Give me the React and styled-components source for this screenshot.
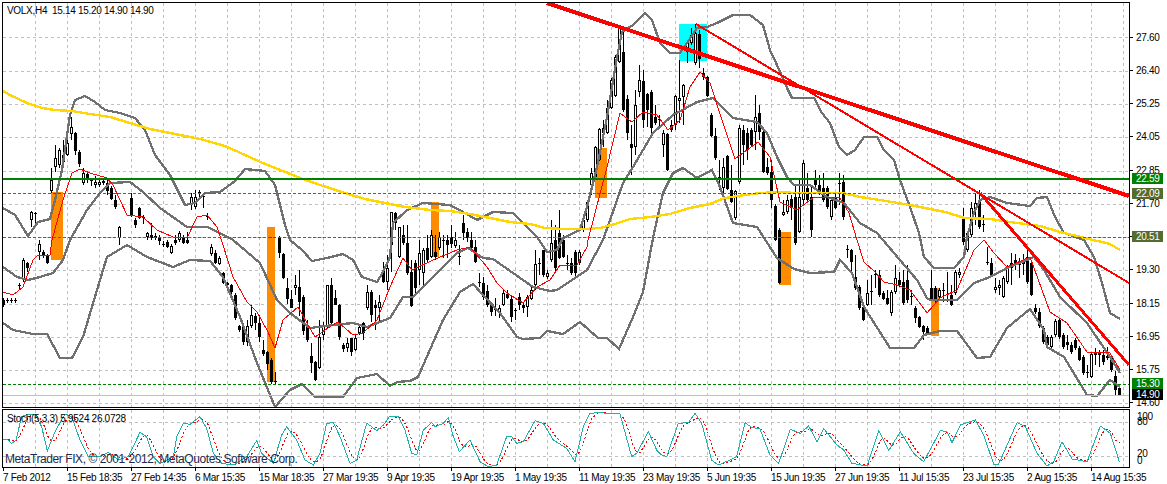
import React from 'react';
import styled, { createGlobalStyle } from 'styled-components';

/* Price scale ---------------------------*/
const PRICES = ['27.60','26.40','25.25','24.05','22.85','21.70','20.50','19.30','18.15','16.95','15.75','14.60'];
const GRID_Y = [37,71,104,137,171,204,237,270,304,337,370,403];
const GRID_X = Array.from({ length: 35 }, (_, i) => 35 + i * 32);

const DATES = [
    '7 Feb 2012','15 Feb 18:35','27 Feb 14:35','6 Mar 15:35','15 Mar 18:35','27 Mar 19:35',
    '9 Apr 19:35','19 Apr 19:35','1 May 19:35','11 May 19:35','23 May 19:35','5 Jun 19:35',
    '15 Jun 19:35','27 Jun 19:35','11 Jul 15:35','23 Jul 15:35','2 Aug 15:35','14 Aug 15:35',
];

const TAGS = [
    { text: '22.59', top: 171, bg: '#008000' },
    { text: '22.09', top: 186, bg: '#556b2f' },
    { text: '20.51', top: 229, bg: '#556b2f' },
    { text: '15.30', top: 376, bg: '#008000' },
    { text: '14.90', top: 387, bg: '#000000' },
];

/* Indicator lines, traced from the chart ---------------------------*/
const YELLOW = '3,91 10,95 27,103 42,108 55,110 72,111 90,114 110,117 130,123 150,129 180,135 200,139 225,146 245,155 265,164 285,172 300,178 320,185 345,193 365,199 380,202 390,204 405,207 430,210 450,211 470,214 490,218 510,222 530,224 545,228 565,229 585,229 600,228 615,224 630,219 650,217 670,214 690,208 710,204 725,198 745,195 760,193 780,192 795,193 843,193 860,197 880,200 910,205 945,212 965,218 990,219 1010,222 1040,226 1060,232 1085,238 1110,244 1120,250';

const BAND_UPPER = '3,208 15,215 28,236 38,222 50,219 55,200 62,170 70,115 75,100 85,96 95,102 105,110 120,113 135,118 145,130 155,155 170,175 185,205 195,203 205,193 220,192 235,181 245,169 265,171 275,185 285,225 290,240 302,250 312,261 327,258 343,254 353,260 362,277 377,282 383,272 390,257 393,223 407,210 423,203 450,205 463,212 477,220 493,212 513,213 523,223 537,237 547,252 557,250 563,238 580,230 587,207 597,167 607,117 617,57 622,32 633,25 645,13 652,20 660,43 670,53 680,53 687,43 697,28 707,27 717,23 733,15 750,15 763,25 770,50 777,65 787,88 792,98 814,98 822,113 830,123 839,147 847,155 855,150 864,137 877,137 884,150 894,160 900,180 910,207 919,233 924,257 934,268 954,268 964,257 967,237 974,213 980,200 990,197 1007,203 1030,206 1037,198 1047,197 1055,217 1064,233 1084,240 1094,257 1102,283 1110,313 1120,319';

const BAND_MIDDLE = '3,267 17,277 28,280 40,277 53,273 63,260 70,240 87,210 100,193 110,183 130,182 143,192 160,208 187,227 207,227 220,233 233,240 260,263 277,300 290,313 310,328 333,325 353,323 367,327 390,318 403,297 413,297 433,277 457,253 468,248 483,258 493,259 513,273 533,287 550,291 557,290 587,270 603,240 623,183 633,167 653,133 673,115 697,102 713,98 733,118 757,122 767,133 777,157 787,177 794,185 810,185 827,197 844,203 860,223 877,233 894,253 917,280 927,298 930,300 957,300 974,283 990,277 1007,268 1027,260 1034,257 1044,270 1060,297 1087,323 1110,357 1120,373';

const BAND_LOWER = '3,323 13,330 33,334 47,334 60,358 72,358 83,337 100,280 107,257 127,245 147,257 173,267 190,260 210,261 223,277 240,317 257,363 275,407 290,390 302,384 315,397 343,397 357,378 377,374 390,386 397,382 410,381 418,377 443,320 460,292 473,284 483,295 500,313 517,337 523,339 540,338 547,331 563,334 580,322 598,338 607,338 619,349 633,317 643,292 653,238 663,193 673,173 683,168 697,178 712,170 720,187 733,223 757,227 777,258 794,269 810,273 834,272 840,260 852,273 864,307 890,348 914,348 924,335 940,331 957,331 977,358 990,357 1007,328 1030,309 1044,330 1047,347 1064,357 1087,395 1097,396 1110,380 1120,387';

const RED_MA = '3,292 13,295 23,287 33,260 38,255 50,255 52,240 63,200 72,173 80,169 90,173 107,178 113,185 127,215 143,217 157,230 173,237 187,238 197,217 207,215 217,227 223,245 233,277 247,302 257,312 267,330 275,348 283,320 298,307 315,337 328,328 338,322 353,335 363,333 377,320 390,287 403,258 412,270 433,260 457,250 470,247 487,267 497,283 507,293 523,303 537,287 550,280 560,265 577,265 587,247 588,240 607,167 620,113 632,122 643,112 657,115 668,130 680,120 690,87 700,72 710,83 723,123 735,159 747,150 758,142 770,157 780,202 797,210 814,197 827,197 840,198 849,213 857,240 864,262 875,272 884,282 897,285 910,290 927,313 940,298 957,290 974,250 984,240 994,253 1007,267 1030,257 1050,312 1067,323 1087,352 1110,353 1120,370';

const STOCH_TRACE = [
    '8,598 22,598 35,610 48,600 65,530 85,523 105,523 125,560 142,633 165,575 195,522 215,530 240,600 265,650 300,650 325,637 355,660 385,650 420,577 440,590 460,650 480,670 520,650 530,590 550,550 570,553 600,530 620,565 640,640 665,670 700,675 740,650 770,602 785,640 820,670 845,585 860,560 890,600 915,660 940,675 960,640 980,550 1000,548 1020,590 1050,670 1070,660 1100,550 1115,560 1130,572 1150,555',
    '1170,528 1195,530 1215,570 1235,640 1250,645 1270,570 1295,548 1305,560 1330,550 1345,533 1360,590 1378,635 1410,600 1440,665 1465,680 1490,675 1520,590 1535,590 1550,610 1570,605 1605,542 1630,550 1660,600 1700,625 1725,665 1750,560 1770,520 1795,518 1860,522 1895,650 1910,640 1945,575 1970,630 1985,645 2000,650 2035,550 2065,548 2085,520 2105,550 2135,660 2155,675 2190,660 2210,650 2235,548 2255,562 2280,567 2310,645',
    '2336,670 2371,568 2401,580 2426,558 2451,605 2471,566 2511,615 2531,630 2556,670 2601,678 2636,572 2666,632 2701,575 2741,640 2771,665 2821,572 2841,575 2856,608 2881,555 2926,540 2951,585 2981,672 2996,672 3051,548 3076,560 3111,640 3141,678 3161,665 3186,605 3216,657 3261,665 3301,558 3331,580 3358,665',
].join(' ');

/* Zoomed trace coordinates (3x) to page coordinates */
const stochPoints = STOCH_TRACE.split(' ').map((p) => {
    const [x, y] = p.split(',').map(Number);
    return [x / 3, 240 + y / 3];
});

const stochAt = (x) => {
    const i = stochPoints.findIndex((p) => p[0] >= x);
    if (i <= 0) return stochPoints[0][1];
    const [x0, y0] = stochPoints[i - 1];
    const [x1, y1] = stochPoints[i];
    return y0 + ((y1 - y0) * (x - x0)) / (x1 - x0);
};

const toLine = (points) => points.map((p) => p.join(',')).join(' ');

/* %D is the 3 bar average of %K */
const signalLine = () => {
    const points = [];
    for (let x = 4; x <= 1120; x += 4) {
        points.push([x, (stochAt(x) + stochAt(x - 4) + stochAt(x - 8)) / 3]);
    }
    return toLine(points);
};

/* Candles: x, high, body top, body bottom, low, filled ---------------------------*/
const CANDLES = [
[4,298,300,305,307,1],[8,298,300,301,303,1],[12,298,300,301,303,1],[16,298,300,301,303,1],[20,283,285,286,290,1],[24,258,260,280,282,0],[28,262,263,268,272,1],[32,211,212,220,227,0],[36,212,213,214,227,1],[40,240,244,252,260,0],[44,250,252,256,258,1],[48,254,256,263,264,1],
[52,168,180,191,193,0],[56,145,158,167,172,0],[60,148,150,165,168,0],[64,140,155,162,168,0],[68,139,143,155,156,0],[72,117,127,134,140,0],[76,132,133,151,155,1],[80,150,152,164,167,1],[84,168,173,183,185,0],[88,172,174,178,183,1],[92,179,180,181,186,1],[96,176,182,185,188,0],[100,180,182,185,187,0],[104,179,181,183,185,0],[108,178,183,191,195,1],[112,186,188,199,200,1],[116,195,200,207,209,1],[120,226,227,238,245,0],
[132,193,198,215,217,1],[136,218,220,225,228,1],[140,207,208,218,219,1],[144,215,217,218,224,1],[148,232,233,237,240,0],[152,223,235,238,240,1],[156,233,236,238,240,1],[160,235,238,241,245,1],[164,241,244,245,247,1],[168,240,242,247,248,1],[172,244,246,253,254,0],[176,235,240,243,245,1],[180,231,233,240,242,0],[184,235,237,243,244,1],[188,232,240,243,244,1],
[192,193,197,205,210,0],[196,190,197,207,209,0],[200,190,192,194,200,1],[204,194,196,197,208,1],[208,213,216,217,220,1],[212,244,247,254,256,0],[216,250,253,263,264,1],[220,256,258,264,265,0],[224,272,273,283,284,1],[228,282,283,285,287,1],[232,284,285,292,294,1],[236,293,295,318,320,1],[240,325,326,330,332,1],[244,326,327,342,345,1],[248,320,326,342,346,0],[252,305,315,326,328,0],[256,313,316,323,330,1],[260,315,323,337,342,1],[264,340,350,354,356,1],[268,351,352,364,370,1],[272,358,360,382,384,1],[276,372,381,382,384,1],
[280,236,237,253,258,1],[284,253,254,278,279,1],[288,278,288,299,304,1],[292,290,299,308,308,1],[296,275,285,288,295,0],[300,270,287,302,316,1],[304,295,297,331,335,1],[308,320,326,340,342,1],[312,343,356,363,373,1],[316,361,362,380,381,1],[320,320,337,368,369,0],[324,322,326,335,340,0],[328,285,285,327,328,0],[332,278,285,323,325,1],[336,290,298,305,305,1],[340,304,305,337,340,1],[344,343,345,349,352,1],[348,338,343,348,352,0],[352,338,338,352,356,1],[356,335,338,350,351,0],[360,325,327,333,335,0],[364,322,323,333,340,1],[368,285,292,308,310,0],[372,290,292,315,322,1],[376,300,305,308,330,1],[380,295,302,308,322,0],[384,262,270,282,283,1],[388,255,268,282,290,0],
[392,212,212,245,272,0],[396,212,213,223,230,1],[400,227,227,257,258,0],[404,225,235,243,245,1],[408,225,243,273,275,1],[412,260,272,306,307,1],[416,260,263,288,295,1],[420,240,253,270,285,0],[424,248,250,273,285,0],[428,235,248,260,262,1],[432,230,235,257,258,0],[436,235,252,257,260,1],[440,232,237,248,250,0],[444,235,240,241,258,1],[448,235,240,245,258,1],[452,225,237,244,248,1],[456,232,240,246,248,0],[460,245,256,257,265,1],[464,215,223,233,240,1],[468,228,232,238,242,1],[472,232,240,248,250,1],[476,240,247,262,263,1],
[480,273,282,283,287,1],[484,277,283,297,300,1],[488,285,291,305,307,1],[492,304,305,312,316,1],[496,298,309,310,316,1],[500,305,308,313,318,0],[504,290,293,305,306,0],[508,290,294,298,299,1],[512,295,299,317,322,1],[516,308,310,311,320,1],[520,293,297,305,310,1],[524,303,305,308,313,1],[528,295,297,307,317,0],[532,285,290,299,300,0],[536,250,264,285,290,0],[540,258,263,264,275,1],[544,250,250,275,277,1],[548,270,273,277,279,0],[552,220,243,260,262,0],[556,225,240,268,272,1],[560,210,233,258,259,1],[564,235,240,257,258,1],[568,255,263,264,270,1],[572,258,263,273,275,1],[576,250,252,273,276,1],[580,250,252,263,265,0],
[584,218,220,230,232,0],[588,200,202,220,222,0],[592,168,173,185,195,0],[596,146,147,177,178,0],[600,128,129,160,161,0],[604,120,128,133,147,1],[608,100,108,133,134,0],[612,78,80,108,109,0],[616,55,57,96,97,0],[620,27,28,62,63,0],[624,32,52,110,112,1],[628,95,99,133,140,1],[632,125,144,148,175,1],[636,90,105,147,155,0],[640,65,80,92,97,0],[644,70,81,120,128,1],[648,93,94,110,127,1],[652,90,92,128,135,1],[656,105,117,123,125,1],[660,115,119,120,128,1],[664,130,133,145,157,0],[668,133,134,170,171,1],[672,120,125,130,132,1],[676,95,96,125,130,0],[680,60,98,101,123,0],[684,84,85,97,125,0],[688,41,43,52,63,0],[692,28,35,43,45,0],[696,24,33,63,65,0],[700,30,34,59,68,1],[704,68,73,77,80,1],[708,76,77,96,97,1],
[712,113,115,136,137,1],[716,128,136,158,160,1],[720,160,177,179,190,1],[724,158,167,188,197,0],[728,155,156,189,190,1],[732,165,190,202,203,1],[736,190,191,218,220,0],[740,125,128,182,184,0],[744,125,130,145,165,1],[748,128,133,150,160,1],[752,128,130,145,147,1],[756,95,117,132,150,0],[760,105,113,132,140,1],[764,130,132,172,173,1],[768,158,167,173,175,1],[772,160,172,200,208,1],[776,204,206,240,241,1],[780,228,230,283,284,1],
[784,200,212,215,216,0],[788,195,200,212,214,0],[792,195,199,208,220,1],[796,185,197,243,245,1],[800,178,197,232,233,0],[804,160,163,200,205,0],[808,173,188,200,201,1],[812,187,197,230,237,1],[816,170,180,185,187,1],[820,175,185,192,195,1],[824,173,188,200,202,1],[828,186,188,207,209,1],[832,198,200,217,220,0],[836,193,198,208,209,1],[840,173,183,184,205,1],[844,175,182,217,220,1],
[848,245,249,250,258,1],[852,249,250,262,272,1],[856,255,277,288,290,1],[860,285,287,308,310,1],[864,306,307,320,321,1],[868,280,293,305,306,0],[872,275,291,292,305,1],[876,270,274,275,288,1],[880,270,275,295,297,1],[884,291,293,299,300,1],[888,290,298,304,305,1],[892,290,292,313,316,0],[896,265,278,292,294,0],[900,272,280,285,287,1],[904,270,282,303,305,1],[908,265,280,300,303,1],[912,290,296,297,305,1],[916,306,308,318,323,1],[920,316,317,327,328,1],[924,325,326,332,340,1],[928,326,328,334,335,1],[932,270,288,299,301,1],[936,286,288,300,302,1],[940,288,290,297,299,0],[944,283,290,291,302,1],[948,272,294,295,302,1],[952,285,295,305,306,1],[956,270,272,293,295,0],[960,268,272,275,278,0],
[964,208,218,242,245,1],[968,231,233,250,252,0],[972,202,208,235,237,0],[976,193,203,210,225,0],[980,190,200,227,229,1],[984,215,224,225,232,1],[988,247,262,263,265,1],[992,258,263,275,277,1],[996,278,287,290,293,0],[1000,280,285,288,295,0],[1004,276,278,297,298,0],[1008,265,268,282,284,0],[1012,253,263,268,285,1],[1016,254,260,265,270,1],[1020,258,261,265,278,1],[1024,254,260,264,275,1],[1028,250,257,282,284,1],[1032,261,263,295,296,1],[1036,304,308,312,314,1],[1040,308,312,326,328,1],[1044,326,328,342,344,1],[1048,335,337,345,347,1],[1052,335,337,347,348,0],[1056,319,321,335,337,0],[1060,318,320,337,339,1],[1064,333,335,347,349,1],[1068,335,342,345,350,1],[1072,342,345,352,354,1],[1076,338,340,348,350,1],[1080,346,348,360,361,1],[1084,355,357,373,375,1],[1088,365,372,373,378,1],[1092,352,354,377,378,0],[1096,348,353,355,365,1],[1100,350,353,355,367,1],[1104,350,355,362,365,1],[1108,347,356,358,360,1],[1112,355,357,370,372,1],[1116,371,376,390,395,1],[1120,386,388,395,396,1],
];

const ORANGE = [[51,192,12,68],[267,227,8,155],[431,202,8,55],[595,148,12,50],[779,232,12,53],[931,288,8,48]];
const BLUE_DASH = [[53,62,193],[269,275,237],[433,439,237],[597,607,193],[781,790,237]];

const App = () => {
    return (
        <ChartWindow>
            <GlobalStyle />
            <MainPane>
                <ChartSvg viewBox="3 3 1126 404" $height={404}>
                    <GridLines ys={GRID_Y} y1={3} y2={407} />
                    <g shapeRendering="crispEdges">
                        <rect x="679" y="24" width="28" height="37" fill="#00ffff" />
                        {ORANGE.map(([x, y, w, h]) => (
                            <rect key={x} x={x} y={y} width={w} height={h} fill="#ff8c00" />
                        ))}
                        {CANDLES.map(([x, hi, top, bot, lo, filled]) => (
                            <g key={x}>
                                <line x1={x - 0.5} x2={x - 0.5} y1={hi} y2={lo} stroke="#000" />
                                {filled
                                    ? <rect x={x - 2} y={top} width="3" height={bot - top} fill="#000" />
                                    : <rect x={x - 1.5} y={top + 0.5} width="2" height={bot - top - 1} fill="#fff" stroke="#000" />}
                            </g>
                        ))}
                        <polyline points={BAND_UPPER} fill="none" stroke="#707070" strokeWidth="2.3" />
                        <polyline points={BAND_MIDDLE} fill="none" stroke="#707070" strokeWidth="2.3" />
                        <polyline points={BAND_LOWER} fill="none" stroke="#707070" strokeWidth="2.3" />
                        <polyline points={YELLOW} fill="none" stroke="#ffd700" strokeWidth="2.4" />
                        <polyline points={RED_MA} fill="none" stroke="#ff0000" strokeWidth="1" />
                        <line x1="3" x2="1129" y1="179" y2="179" stroke="#008000" strokeWidth="2" />
                        <line x1="3" x2="1129" y1="193.5" y2="193.5" stroke="#556b2f" strokeDasharray="3 2" />
                        <line x1="3" x2="1129" y1="237.5" y2="237.5" stroke="#556b2f" strokeDasharray="3 2" />
                        <line x1="3" x2="1129" y1="384.5" y2="384.5" stroke="#008000" strokeDasharray="3 2" />
                        <line x1="3" x2="1129" y1="395.5" y2="395.5" stroke="#c0c0c0" />
                        {BLUE_DASH.map(([x1, x2, y]) => (
                            <line key={x1} x1={x1} x2={x2} y1={y + 0.5} y2={y + 0.5} stroke="#3a3ad0" strokeDasharray="3 2" />
                        ))}
                        <line x1="547" y1="3" x2="1129" y2="196" stroke="#ff0000" strokeWidth="4" />
                        <line x1="696" y1="24" x2="1129" y2="283" stroke="#ff0000" strokeWidth="2" />
                        <line x1="980" y1="193" x2="1129" y2="365" stroke="#ff0000" strokeWidth="3" />
                    </g>
                </ChartSvg>
                <PaneLabel $top={2}>VOLX,H4&nbsp;&nbsp;15.14 15.20 14.90 14.90</PaneLabel>
            </MainPane>

            <PriceAxis>
                {PRICES.map((price) => <PriceTick key={price}>{price}</PriceTick>)}
                {TAGS.map((tag) => <PriceTag key={tag.text} $top={tag.top} $bg={tag.bg}>{tag.text}</PriceTag>)}
            </PriceAxis>

            <SubPane>
                <ChartSvg viewBox="3 410 1126 57" $height={57}>
                    <GridLines ys={[422, 456]} y1={410} y2={467} />
                    <g shapeRendering="crispEdges">
                        <polyline points={signalLine()} fill="none" stroke="#ff0000" strokeDasharray="2 2" />
                        <polyline points={toLine(stochPoints)} fill="none" stroke="#20b2aa" />
                    </g>
                </ChartSvg>
                <PaneLabel $top={3}>Stoch(5,3,3) 5.9524 26.0728</PaneLabel>
                <Watermark>MetaTrader FIX, © 2001-2012, MetaQuotes Software Corp.</Watermark>
            </SubPane>

            <SubAxis>
                <SubTick $top={2}>100</SubTick>
                <SubTick $top={7}>80</SubTick>
                <SubTick $top={39}>20</SubTick>
                <SubTick $top={46}>0</SubTick>
            </SubAxis>

            <TimeAxis>
                {DATES.map((date) => <TimeTick key={date}>{date}</TimeTick>)}
            </TimeAxis>
        </ChartWindow>
    );
};

export default App;

const GridLines = ({ ys, y1, y2 }) => (
    <g stroke="#c0c0c0" strokeDasharray="3 3" shapeRendering="crispEdges">
        {GRID_X.map((x) => <line key={x} x1={x + 0.5} x2={x + 0.5} y1={y1} y2={y2} />)}
        {ys.map((y) => <line key={y} x1="3" x2="1129" y1={y + 0.5} y2={y + 0.5} />)}
    </g>
);

const GlobalStyle = createGlobalStyle`
    html, body { margin: 0; background: #fff; }
    body {
        font-family: "Liberation Sans", Arial, sans-serif;
        font-size: 10px;
        letter-spacing: -0.3px;
        color: #000;
        overflow: hidden;
    }
`;

const ChartWindow = styled.div`
    display: grid;
    grid-template-columns: 1128px 38px;
    grid-template-rows: 406px 59px 16px;
    row-gap: 1px;
    padding: 2px 0 0 2px;
    width: 1167px;
    height: 484px;
    box-sizing: border-box;
`;

const MainPane = styled.div`
    position: relative;
    box-sizing: border-box;
    border: 1px solid #000;
    overflow: hidden;
`;

const SubPane = styled(MainPane)``;

const ChartSvg = styled.svg`
    display: block;
    width: 1126px;
    height: ${({ $height }) => $height}px;
`;

const PaneLabel = styled.div`
    position: absolute;
    left: 4px;
    top: ${({ $top }) => $top}px;
    white-space: nowrap;
    line-height: 12px;
`;

const Watermark = styled.div`
    position: absolute;
    left: 2px;
    bottom: 1px;
    font-size: 12px;
    letter-spacing: -0.42px;
    line-height: 14px;
    color: #1d2a4a;
    white-space: nowrap;
`;

const PriceAxis = styled.div`
    position: relative;
    display: flex;
    flex-direction: column;
    padding-top: 18.4px;
`;

const PriceTick = styled.div`
    flex: 0 0 33.27px;
    display: flex;
    align-items: center;
    padding-left: 6px;

    &::before {
        content: '';
        position: absolute;
        left: 0;
        width: 3px;
        height: 1px;
        background: #000;
    }
`;

const PriceTag = styled.div`
    position: absolute;
    left: 2px;
    top: ${({ $top }) => $top}px;
    width: 31px;
    height: 11px;
    padding-left: 4px;
    box-sizing: border-box;
    background: ${({ $bg }) => $bg};
    color: #fff;
    line-height: 11px;
`;

const SubAxis = styled.div`
    position: relative;
`;

const SubTick = styled.div`
    position: absolute;
    left: 7px;
    top: ${({ $top }) => $top}px;
    line-height: 11px;
`;

const TimeAxis = styled.div`
    grid-column: 1 / -1;
    display: flex;
    margin-top: -1px;
    padding-left: 1px;
`;

const TimeTick = styled.div`
    flex: 0 0 64px;
    position: relative;
    padding-top: 4px;
    white-space: nowrap;
    line-height: 11px;

    &::before {
        content: '';
        position: absolute;
        left: 0;
        top: 0;
        width: 1px;
        height: 3px;
        background: #000;
    }
`;
